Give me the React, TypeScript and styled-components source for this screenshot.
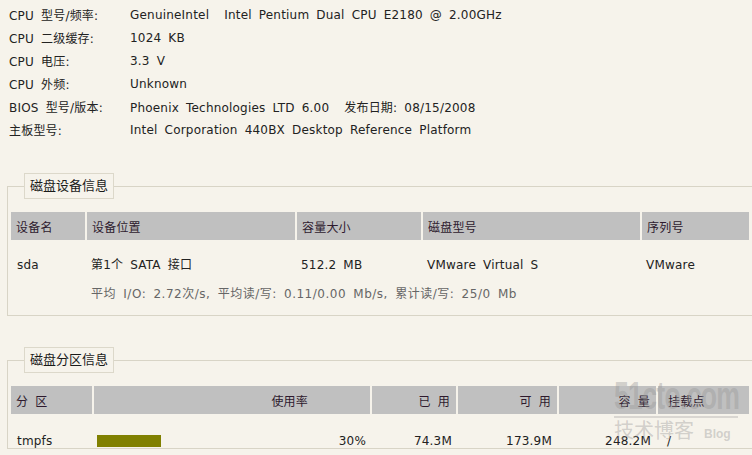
import React from "react";
import styled, { createGlobalStyle } from "styled-components";

const GlobalStyle = createGlobalStyle`
  html, body {
    margin: 0;
    padding: 0;
    background: #f6f3eb;
    overflow: hidden;
  }
  body {
    font-family: "DejaVu Sans", Verdana, "Noto Sans CJK SC", sans-serif;
    font-size: 12px;
    letter-spacing: 0.2px;
    word-spacing: 3px;
    color: #222;
  }
`;

const Page = styled.div`
  position: relative;
  width: 752px;
  height: 455px;
  padding-top: 3px;
  box-sizing: border-box;
  overflow: hidden;
`;

const InfoList = styled.div`
  display: grid;
  grid-template-columns: 121px 1fr;
  grid-auto-rows: 23px;
  align-items: center;
  padding-left: 9px;
  margin-bottom: 32px;
`;

const Label = styled.div`
  white-space: nowrap;
`;

const Value = styled.div`
  white-space: nowrap;
`;

const Gap = styled.span`
  margin-left: 15px;
`;

const Fieldset = styled.fieldset`
  margin: 0 -30px 0 7px;
  padding: 0 0 0 3px;
  border: 1px solid #d8d4c6;
  & + & {
    margin-top: 31px;
  }
`;

const Legend = styled.legend`
  margin-left: 13px;
  padding: 0 5px;
  height: 24px;
  line-height: 24px;
  border: 1px solid #dcd8ca;
  font-size: 13px;
  letter-spacing: 0;
  color: #1a1a1a;
`;

const Table = styled.table`
  table-layout: fixed;
  border-collapse: collapse;
  margin-top: 13px;
  width: 738px;
`;

const Th = styled.th<{ $align?: string; $pr?: number; $pl?: number }>`
  height: 28px;
  padding: 0 ${(p) => p.$pr ?? 0}px 0 ${(p) => p.$pl ?? 5}px;
  background: #c0c0c0;
  border-right: 2px solid #f6f3eb;
  text-align: ${(p) => p.$align ?? "left"};
  font-weight: normal;
  color: #2e1a2e;
  white-space: nowrap;
  &:last-child {
    border-right: none;
  }
`;

const Td = styled.td<{ $align?: string; $pr?: number; $pl?: number; $top?: number }>`
  padding: ${(p) => p.$top ?? 18}px ${(p) => p.$pr ?? 0}px 0 ${(p) => p.$pl ?? 5}px;
  text-align: ${(p) => p.$align ?? "left"};
  line-height: 14px;
  white-space: nowrap;
  vertical-align: top;
`;

const Detail = styled.td`
  padding: 15px 0 14px 5px;
  line-height: 14px;
  letter-spacing: 0.5px;
  color: #666;
  white-space: nowrap;
`;

const BarCell = styled.div`
  display: flex;
  align-items: center;
  justify-content: space-between;
`;

const Bar = styled.div`
  height: 12px;
  background: #808000;
`;

const Watermark = styled.div`
  position: absolute;
  left: 614px;
  top: 374px;
  width: 128px;
  color: rgba(150, 150, 150, 0.4);
  pointer-events: none;
  letter-spacing: 0;
  word-spacing: 0;
  font-family: "Liberation Sans", Arial, "Noto Sans CJK SC", sans-serif;
`;

const MarkBig = styled.div`
  font-size: 38px;
  font-weight: bold;
  letter-spacing: -1px;
  line-height: 44px;
  white-space: nowrap;
  transform: scaleX(0.7);
  transform-origin: left;
`;

const MarkRow = styled.div`
  display: flex;
  align-items: baseline;
  gap: 10px;
  border-top: 2px solid rgba(150, 150, 150, 0.3);
  width: 124px;
  margin-top: -2px;
`;

const MarkCn = styled.span`
  font-size: 20px;
  font-family: "Noto Sans CJK SC", sans-serif;
  line-height: 24px;
`;

const MarkBlog = styled.span`
  font-size: 12px;
  font-weight: bold;
`;

const info: [string, React.ReactNode][] = [
  ["CPU 型号/频率:", <>GenuineIntel<Gap>Intel Pentium Dual CPU E2180 @ 2.00GHz</Gap></>],
  ["CPU 二级缓存:", "1024 KB"],
  ["CPU 电压:", "3.3 V"],
  ["CPU 外频:", "Unknown"],
  ["BIOS 型号/版本:", <>Phoenix Technologies LTD 6.00<Gap>发布日期: 08/15/2008</Gap></>],
  ["主板型号:", "Intel Corporation 440BX Desktop Reference Platform"],
];

const usage = 30;

export default function App() {
  return (
    <Page>
      <GlobalStyle />
      <InfoList>
        {info.map(([k, v]) => (
          <React.Fragment key={k}>
            <Label>{k}</Label>
            <Value>{v}</Value>
          </React.Fragment>
        ))}
      </InfoList>

      <Fieldset>
        <Legend>磁盘设备信息</Legend>
        <Table>
          <colgroup>
            <col style={{ width: 75 }} />
            <col style={{ width: 210 }} />
            <col style={{ width: 126 }} />
            <col style={{ width: 219 }} />
            <col style={{ width: 108 }} />
          </colgroup>
          <thead>
            <tr>
              <Th>设备名</Th>
              <Th>设备位置</Th>
              <Th>容量大小</Th>
              <Th>磁盘型号</Th>
              <Th>序列号</Th>
            </tr>
          </thead>
          <tbody>
            <tr>
              <Td $pl={6}>sda</Td>
              <Td>第1个 SATA 接口</Td>
              <Td>512.2 MB</Td>
              <Td>VMware Virtual S</Td>
              <Td>VMware</Td>
            </tr>
            <tr>
              <td />
              <Detail colSpan={4}>平均 I/O: 2.72次/s, 平均读/写: 0.11/0.00 Mb/s, 累计读/写: 25/0 Mb</Detail>
            </tr>
          </tbody>
        </Table>
      </Fieldset>

      <Fieldset>
        <Legend>磁盘分区信息</Legend>
        <Table>
          <colgroup>
            <col style={{ width: 82 }} />
            <col style={{ width: 278 }} />
            <col style={{ width: 86 }} />
            <col style={{ width: 101 }} />
            <col style={{ width: 99 }} />
            <col style={{ width: 92 }} />
          </colgroup>
          <thead>
            <tr>
              <Th>分 区</Th>
              <Th $align="right" $pr={62}>使用率</Th>
              <Th $align="right" $pr={6}>已 用</Th>
              <Th $align="right" $pr={6}>可 用</Th>
              <Th $align="right" $pr={6}>容 量</Th>
              <Th $pl={10}>挂载点</Th>
            </tr>
          </thead>
          <tbody>
            <tr>
              <Td $pl={6} $top={20}>tmpfs</Td>
              <Td $pl={4} $pr={5} $top={20}>
                <BarCell>
                  <Bar style={{ width: Math.round(usage * 2.13) }} />
                  <span>{usage}%</span>
                </BarCell>
              </Td>
              <Td $align="right" $pr={5} $top={20}>74.3M</Td>
              <Td $align="right" $pr={6} $top={20}>173.9M</Td>
              <Td $align="right" $pr={6} $top={20}>248.2M</Td>
              <Td $pl={10} $top={20}>/</Td>
            </tr>
          </tbody>
        </Table>
      </Fieldset>

      <Watermark>
        <MarkBig>51cto.com</MarkBig>
        <MarkRow>
          <MarkCn>技术博客</MarkCn>
          <MarkBlog>Blog</MarkBlog>
        </MarkRow>
      </Watermark>
    </Page>
  );
}
